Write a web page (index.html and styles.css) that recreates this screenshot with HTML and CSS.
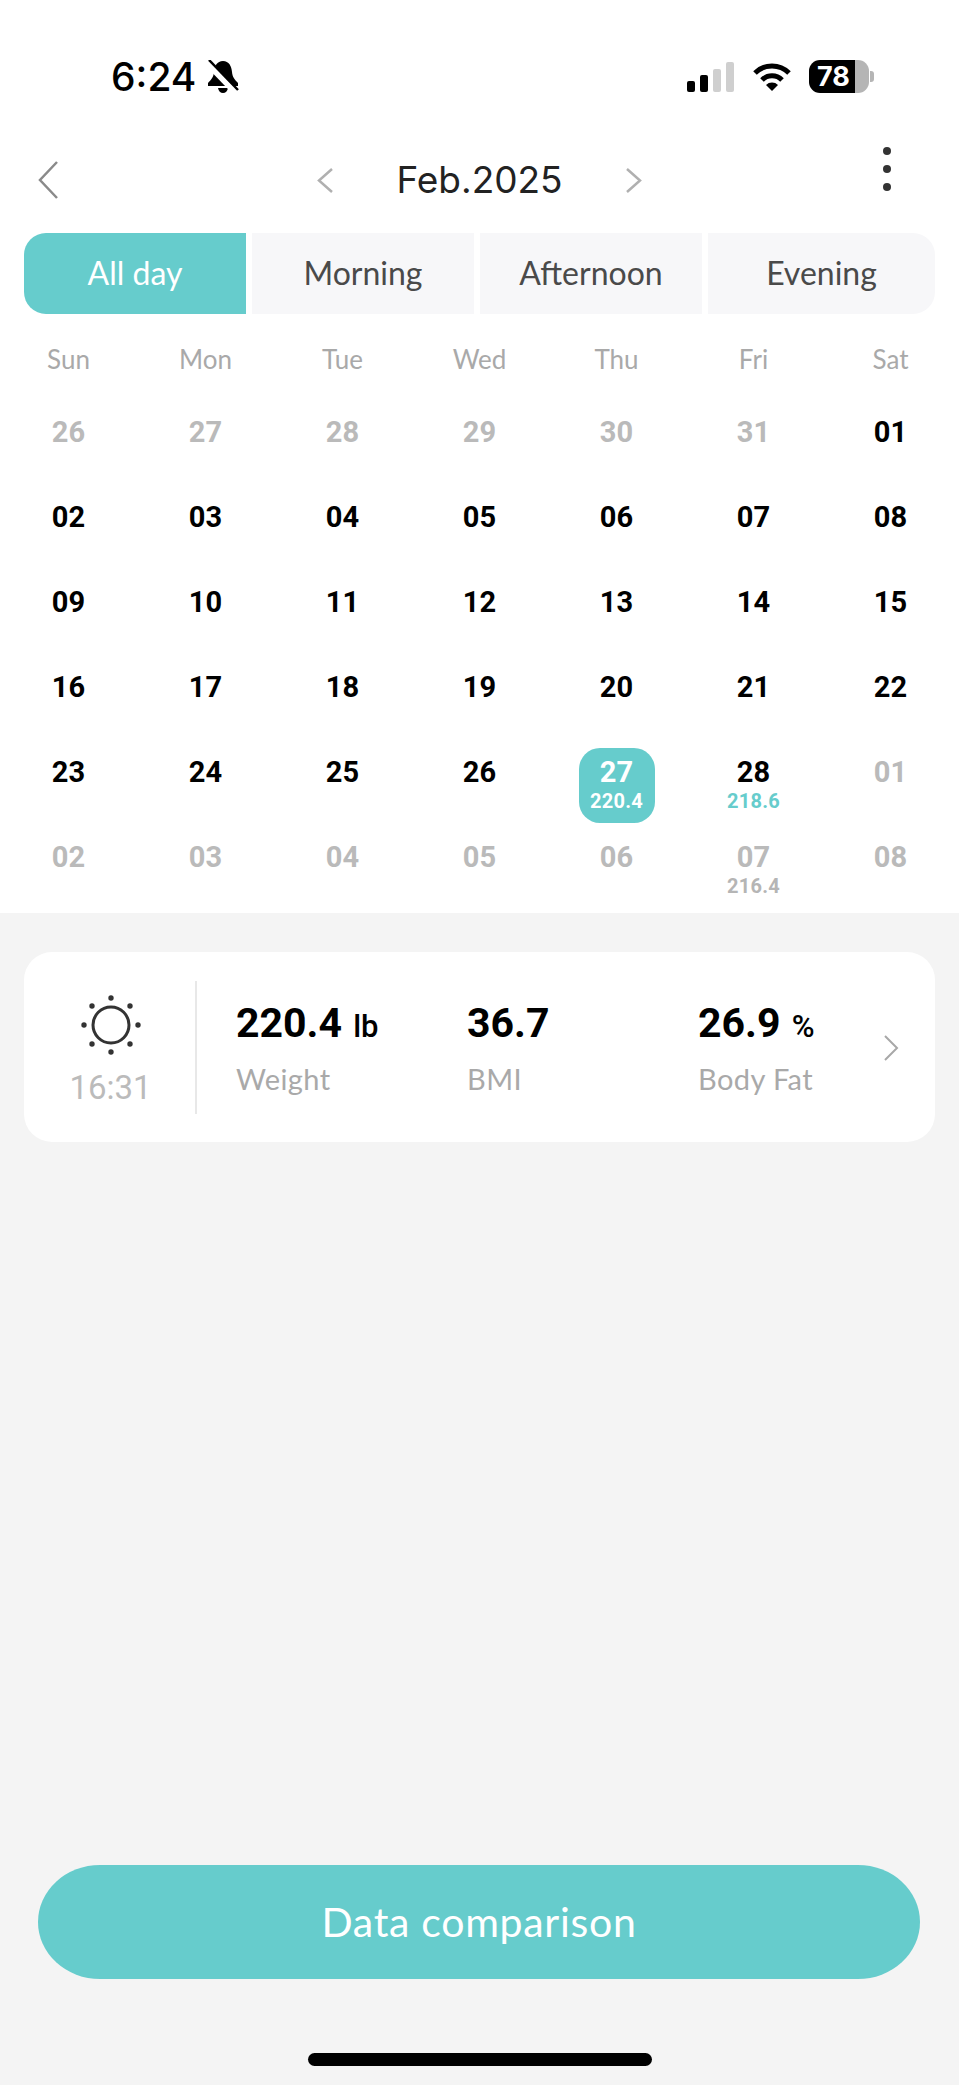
FILE: index.html
```html
<!DOCTYPE html>
<html lang="en">

<head>
    <meta charset="UTF-8">
    <meta name="viewport" content="width=device-width, initial-scale=1.0">
    <title>Weight calendar</title>
    <link rel="stylesheet" href="styles.css">
</head>

<body>
    <!-- Calendar panel -->
    <div class="panel">
        <!-- Status bar -->
        <div class="status-bar">
            <div class="status-left">
                <span class="clock">6:24</span>
                <svg class="bell" viewBox="0 0 32 33" width="32" height="33">
                    <path d="M16 1C10 1 7.500 6 7 12C6.600 17 4 20 1 23V26H31V23C28 20 25.400 17 25 12C24.500 6 22 1 16 1Z" fill="#000" />
                    <path d="M11 28H21C20.500 31 18.500 33 16 33C13.500 33 11.500 31 11 28Z" fill="#000" />
                    <path d="M0 3L29 33" stroke="#fff" stroke-width="6" />
                    <path d="M2 0L31 30" stroke="#000" stroke-width="2.500" />
                </svg>
            </div>
            <div class="status-right">
                <div class="signal">
                    <span class="bar bar1"></span>
                    <span class="bar bar2"></span>
                    <span class="bar bar3 off"></span>
                    <span class="bar bar4 off"></span>
                </div>
                <svg class="wifi" viewBox="0 0 40 29" width="40" height="29">
                    <path d="M3 11A24 24 0 0 1 37 11" fill="none" stroke="#000" stroke-width="5" />
                    <path d="M10 18A14 14 0 0 1 30 18" fill="none" stroke="#000" stroke-width="5" />
                    <path d="M20 29L14 23A8.500 8.500 0 0 1 26 23Z" fill="#000" />
                </svg>
                <div class="battery">78</div>
                <span class="battery-nub"></span>
            </div>
        </div>

        <!-- Header -->
        <header class="top-nav">
            <svg class="back" viewBox="0 0 20 38" width="20" height="38">
                <path d="M19 1L2 19L19 37" fill="none" stroke="#8a8a8a" stroke-width="2.500" />
            </svg>
            <div class="month-nav">
                <svg viewBox="0 0 16 25" width="16" height="25">
                    <path d="M15 1L2 12.500L15 24" fill="none" stroke="#b0b0b0" stroke-width="2.500" />
                </svg>
                <span class="month">Feb.2025</span>
                <svg viewBox="0 0 16 25" width="16" height="25">
                    <path d="M1 1L14 12.500L1 24" fill="none" stroke="#b0b0b0" stroke-width="2.500" />
                </svg>
            </div>
            <div class="more">
                <span></span>
                <span></span>
                <span></span>
            </div>
        </header>

        <!-- Time of day tabs -->
        <div class="tabs">
            <div class="tab active">All day</div>
            <div class="tab">Morning</div>
            <div class="tab">Afternoon</div>
            <div class="tab">Evening</div>
        </div>

        <!-- Calendar -->
        <div class="weekdays">
            <span>Sun</span>
            <span>Mon</span>
            <span>Tue</span>
            <span>Wed</span>
            <span>Thu</span>
            <span>Fri</span>
            <span>Sat</span>
        </div>
        <div class="days">
            <div class="day muted"><b>26</b></div>
            <div class="day muted"><b>27</b></div>
            <div class="day muted"><b>28</b></div>
            <div class="day muted"><b>29</b></div>
            <div class="day muted"><b>30</b></div>
            <div class="day muted"><b>31</b></div>
            <div class="day"><b>01</b></div>

            <div class="day"><b>02</b></div>
            <div class="day"><b>03</b></div>
            <div class="day"><b>04</b></div>
            <div class="day"><b>05</b></div>
            <div class="day"><b>06</b></div>
            <div class="day"><b>07</b></div>
            <div class="day"><b>08</b></div>

            <div class="day"><b>09</b></div>
            <div class="day"><b>10</b></div>
            <div class="day"><b>11</b></div>
            <div class="day"><b>12</b></div>
            <div class="day"><b>13</b></div>
            <div class="day"><b>14</b></div>
            <div class="day"><b>15</b></div>

            <div class="day"><b>16</b></div>
            <div class="day"><b>17</b></div>
            <div class="day"><b>18</b></div>
            <div class="day"><b>19</b></div>
            <div class="day"><b>20</b></div>
            <div class="day"><b>21</b></div>
            <div class="day"><b>22</b></div>

            <div class="day"><b>23</b></div>
            <div class="day"><b>24</b></div>
            <div class="day"><b>25</b></div>
            <div class="day"><b>26</b></div>
            <div class="day selected"><b>27</b><small>220.4</small></div>
            <div class="day logged"><b>28</b><small>218.6</small></div>
            <div class="day muted"><b>01</b></div>

            <div class="day muted"><b>02</b></div>
            <div class="day muted"><b>03</b></div>
            <div class="day muted"><b>04</b></div>
            <div class="day muted"><b>05</b></div>
            <div class="day muted"><b>06</b></div>
            <div class="day muted"><b>07</b><small>216.4</small></div>
            <div class="day muted"><b>08</b></div>
        </div>
    </div>

    <!-- Measurement card -->
    <section class="card">
        <div class="card-time">
            <svg viewBox="0 0 64 64" width="64" height="64">
                <circle cx="32" cy="32" r="18" fill="none" stroke="#333" stroke-width="3" />
                <circle cx="32" cy="5" r="2.700" fill="#333" />
                <circle cx="32" cy="59" r="2.700" fill="#333" />
                <circle cx="5" cy="32" r="2.700" fill="#333" />
                <circle cx="59" cy="32" r="2.700" fill="#333" />
                <circle cx="13" cy="13" r="2.700" fill="#333" />
                <circle cx="51" cy="13" r="2.700" fill="#333" />
                <circle cx="13" cy="51" r="2.700" fill="#333" />
                <circle cx="51" cy="51" r="2.700" fill="#333" />
            </svg>
            <span>16:31</span>
        </div>
        <div class="stats">
            <div class="stat">
                <div class="value">220.4 <em>lb</em></div>
                <div class="label">Weight</div>
            </div>
            <div class="stat">
                <div class="value">36.7</div>
                <div class="label">BMI</div>
            </div>
            <div class="stat">
                <div class="value">26.9 <em>%</em></div>
                <div class="label">Body Fat</div>
            </div>
        </div>
        <svg class="card-arrow" viewBox="0 0 15 26" width="15" height="26">
            <path d="M1 1L13 13L1 25" fill="none" stroke="#a8a8a8" stroke-width="2" />
        </svg>
    </section>

    <!-- Footer -->
    <div class="footer">
        <button class="compare">Data comparison</button>
        <div class="home-bar"></div>
    </div>
</body>

</html>
```

FILE: styles.css
```css
* {
    box-sizing: border-box;
}

body {
    margin: 0;
    height: 2085px;
    display: flex;
    flex-direction: column;
    background-color: #f4f4f4;
    font-family: "Lato", sans-serif;
    color: #000;
    overflow: hidden;
}

.panel {
    background-color: #fff;
    height: 913px;
    flex: none;
}

/* Status bar */
.status-bar {
    display: flex;
    justify-content: space-between;
    align-items: center;
    height: 33px;
    margin-top: 60px;
    padding: 0 85px 0 111px;
}

.status-left,
.status-right {
    display: flex;
    align-items: center;
}

.clock {
    font-family: "Inter", sans-serif;
    font-size: 39px;
    font-weight: 500;
    line-height: 33px;
}

.bell {
    margin-left: 11px;
}

.signal {
    display: flex;
    align-items: flex-end;
    gap: 5px;
    height: 30px;
    margin-right: 18px;
}

.bar {
    width: 8px;
    background-color: #000;
    border-radius: 2px;
}

.bar.off {
    background-color: #cfcfcf;
}

.bar1 {
    height: 11px;
}

.bar2 {
    height: 17px;
}

.bar3 {
    height: 23px;
}

.bar4 {
    height: 30px;
}

.battery {
    width: 60px;
    height: 33px;
    margin-left: 17px;
    border-radius: 11px;
    background: linear-gradient(90deg, #000 77%, #b5b5b5 77%);
    color: #fff;
    font-family: "Inter", sans-serif;
    font-size: 27px;
    font-weight: 700;
    line-height: 33px;
    padding-left: 8px;
}

.battery-nub {
    width: 4px;
    height: 11px;
    margin-left: 1px;
    border-radius: 0 3px 3px 0;
    background-color: #b5b5b5;
}

/* Header */
.top-nav {
    display: grid;
    grid-template-columns: 1fr auto 1fr;
    align-items: center;
    height: 76px;
    margin-top: 49px;
    padding: 0 38px;
}

.month-nav {
    display: flex;
    align-items: center;
    gap: 63px;
}

.month {
    font-family: "Inter", sans-serif;
    font-size: 37px;
    color: #222;
    line-height: 76px;
}

.more {
    justify-self: end;
    display: flex;
    flex-direction: column;
    gap: 10px;
    margin: -22px 30px 0 0;
}

.more span {
    width: 8px;
    height: 8px;
    border-radius: 50%;
    background-color: #333;
}

/* Tabs */
.tabs {
    display: grid;
    grid-template-columns: 222px 222px 222px 1fr;
    gap: 6px;
    height: 81px;
    margin: 15px 24px 0;
}

.tab {
    display: flex;
    align-items: center;
    justify-content: center;
    padding-bottom: 2px;
    background-color: #f7f7f9;
    color: #4a4a4a;
    font-size: 32px;
}

.tab:first-child {
    border-radius: 22px 0 0 22px;
}

.tab:last-child {
    border-radius: 0 22px 22px 0;
}

.tab.active {
    background-color: #66cccc;
    color: #fff;
}

/* Calendar */
.weekdays {
    display: grid;
    grid-template-columns: repeat(7, 137px);
    height: 36px;
    margin-top: 27px;
    line-height: 36px;
    font-size: 26px;
    text-align: center;
    color: #a9a9a9;
}

.days {
    display: grid;
    grid-template-columns: repeat(7, 137px);
    grid-auto-rows: 75px;
    row-gap: 10px;
    margin-top: 31px;
}

.day {
    display: flex;
    flex-direction: column;
    align-items: center;
    width: 76px;
    justify-self: center;
    padding-top: 7px;
    border-radius: 21px;
    font-family: "Roboto", sans-serif;
    text-align: center;
}

.day b {
    font-size: 29px;
    line-height: 34px;
    font-weight: 700;
}

.day small {
    margin-top: 1px;
    font-size: 20px;
    line-height: 22px;
    font-weight: 700;
    letter-spacing: 0.3px;
    color: #b5b5b5;
}

.day.muted {
    color: #bababa;
}

.day.logged small {
    color: #66cccc;
}

.day.selected {
    background-color: #66cccc;
    color: #fff;
}

.day.selected small {
    color: #fff;
}

/* Measurement card */
.card {
    display: flex;
    align-items: center;
    flex: none;
    height: 190px;
    margin: 39px 24px 0;
    padding-top: 1px;
    border-radius: 28px;
    background-color: #fff;
}

.card-time {
    display: flex;
    flex-direction: column;
    align-items: center;
    width: 173px;
    height: 133px;
    padding: 12px 0 0 2px;
    border-right: 2px solid #e8e8e8;
    font-family: "Roboto", sans-serif;
    font-size: 33px;
    line-height: 34px;
    color: #bbb;
}

.card-time span {
    margin-top: 14px;
}

.stats {
    display: grid;
    grid-template-columns: 231px 231px 170px;
    margin-left: 39px;
    padding-top: 1px;
}

.value {
    font-family: "Roboto", sans-serif;
    font-size: 41px;
    line-height: 46px;
    font-weight: 700;
    white-space: nowrap;
}

.value em {
    font-style: normal;
    font-size: 31px;
    line-height: 1;
    font-weight: 500;
    margin-left: 1px;
}

.label {
    margin-top: 15px;
    font-size: 29px;
    line-height: 36px;
    letter-spacing: 0.4px;
    color: #a9a9a9;
}

.card-arrow {
    margin-left: 16px;
}

/* Footer */
.footer {
    margin-top: auto;
    padding-bottom: 19px;
}

.compare {
    display: block;
    width: 882px;
    height: 114px;
    margin: 0 39px 74px 38px;
    padding: 0 0 2px;
    border: 0;
    border-radius: 62px / 57px;
    background-color: #66cccc;
    color: #fff;
    font-family: "Lato", sans-serif;
    font-size: 41px;
    letter-spacing: 0.7px;
}

.home-bar {
    width: 344px;
    height: 13px;
    margin: 0 auto;
    border-radius: 7px;
    background-color: #000;
}
```
